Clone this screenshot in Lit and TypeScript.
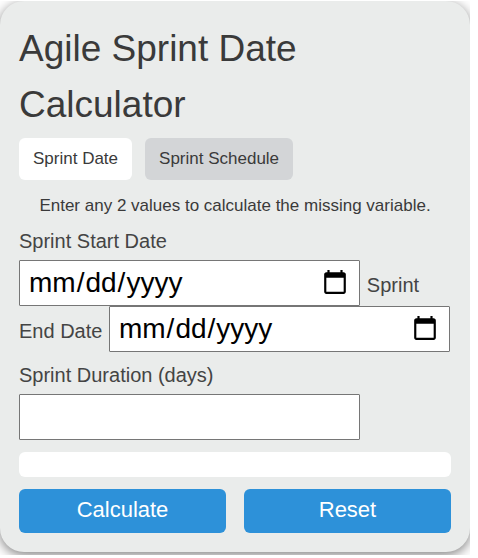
import { LitElement, html, css } from "lit";
import { customElement, state } from "lit/decorators.js";

type Tab = "date" | "schedule";

@customElement("app-root")
export class AppRoot extends LitElement {
  static styles = css`
    :host {
      display: block;
      font-family: "Liberation Sans", Arial, Helvetica, sans-serif;
      color: #3a3a3a;
    }
    .frame {
      margin: 1px 8px 0 0;
      padding-bottom: 3px;
      overflow: hidden;
    }
    .card {
      padding: 20px 19px 19px;
      background: #eaeceb;
      border-radius: 24px;
      box-shadow: 0 3px 12px rgba(0, 0, 0, 0.5);
    }
    .title {
      margin: 0 0 5px;
      font-size: 37px;
      line-height: 56px;
      font-weight: 400;
    }
    .tabs {
      display: flex;
      gap: 13px;
    }
    .tab {
      height: 42px;
      padding: 0 14px;
      border: 0;
      border-radius: 6px;
      background: #d3d5d7;
      color: inherit;
      font: inherit;
      font-size: 17px;
      white-space: nowrap;
    }
    .tab.active {
      background: #fff;
    }
    .hint {
      margin: 13px 0 7px;
      font-size: 17px;
      line-height: 26px;
      text-align: center;
    }
    .label {
      font-size: 20px;
      color: #444;
    }
    .block {
      display: block;
      line-height: 30px;
      margin-bottom: 4px;
    }
    .inline {
      margin: 0 1px;
    }
    .dates {
      font-size: 20px;
      line-height: 24px;
      margin-bottom: 8px;
    }
    .field {
      box-sizing: border-box;
      width: 79%;
      height: 46px;
      margin: 0;
      padding: 1px 8px;
      border: 1px solid #767676;
      border-radius: 1px;
      background: #fff;
      color: #000;
      font-family: inherit;
      font-size: 28px;
    }
    .result {
      display: block;
      height: 25px;
      margin: 12px 0;
      border-radius: 6px;
      background: #fff;
      font-size: 17px;
      line-height: 25px;
      text-align: center;
    }
    .actions {
      display: flex;
      gap: 18px;
    }
    .action {
      flex: 1;
      height: 44px;
      padding: 0 0 2px;
      border: 0;
      border-radius: 6px;
      background: #2d91d9;
      color: #fff;
      font: inherit;
      font-size: 22px;
    }
  `;

  @state() private tab: Tab = "date";
  @state() private result = "";

  private input(id: string) {
    return this.renderRoot.querySelector<HTMLInputElement>("#" + id)!;
  }

  private calculate() {
    const start = this.input("start");
    const end = this.input("end");
    const days = this.input("days");
    const day = 86400000;
    if (start.value && end.value) {
      days.value = String((end.valueAsNumber - start.valueAsNumber) / day);
      this.result = `${days.value} days`;
    } else if (start.value && days.value) {
      end.valueAsNumber = start.valueAsNumber + Number(days.value) * day;
      this.result = end.value;
    } else if (end.value && days.value) {
      start.valueAsNumber = end.valueAsNumber - Number(days.value) * day;
      this.result = start.value;
    }
  }

  private reset() {
    for (const id of ["start", "end", "days"]) this.input(id).value = "";
    this.result = "";
  }

  private tabButton(id: Tab, text: string) {
    return html`<button
      type="button"
      class="tab ${this.tab === id ? "active" : ""}"
      aria-pressed=${this.tab === id}
      @click=${() => (this.tab = id)}
    >${text}</button>`;
  }

  render() {
    return html`
      <main class="frame">
        <section class="card">
          <h1 class="title">Agile Sprint Date Calculator</h1>
          <div class="tabs">
            ${this.tabButton("date", "Sprint Date")}
            ${this.tabButton("schedule", "Sprint Schedule")}
          </div>
          <p class="hint">Enter any 2 values to calculate the missing variable.</p>
          <div class="dates">
            <label class="label block" for="start">Sprint Start Date</label>
            <input class="field" id="start" type="date" />
            <label class="label inline" for="end">Sprint End Date</label>
            <input class="field" id="end" type="date" />
          </div>
          <label class="label block" for="days">Sprint Duration (days)</label>
          <input class="field" id="days" type="number" />
          <output class="result" for="start end days">${this.result}</output>
          <div class="actions">
            <button type="button" class="action" @click=${this.calculate}>Calculate</button>
            <button type="button" class="action" @click=${this.reset}>Reset</button>
          </div>
        </section>
      </main>
    `;
  }
}
